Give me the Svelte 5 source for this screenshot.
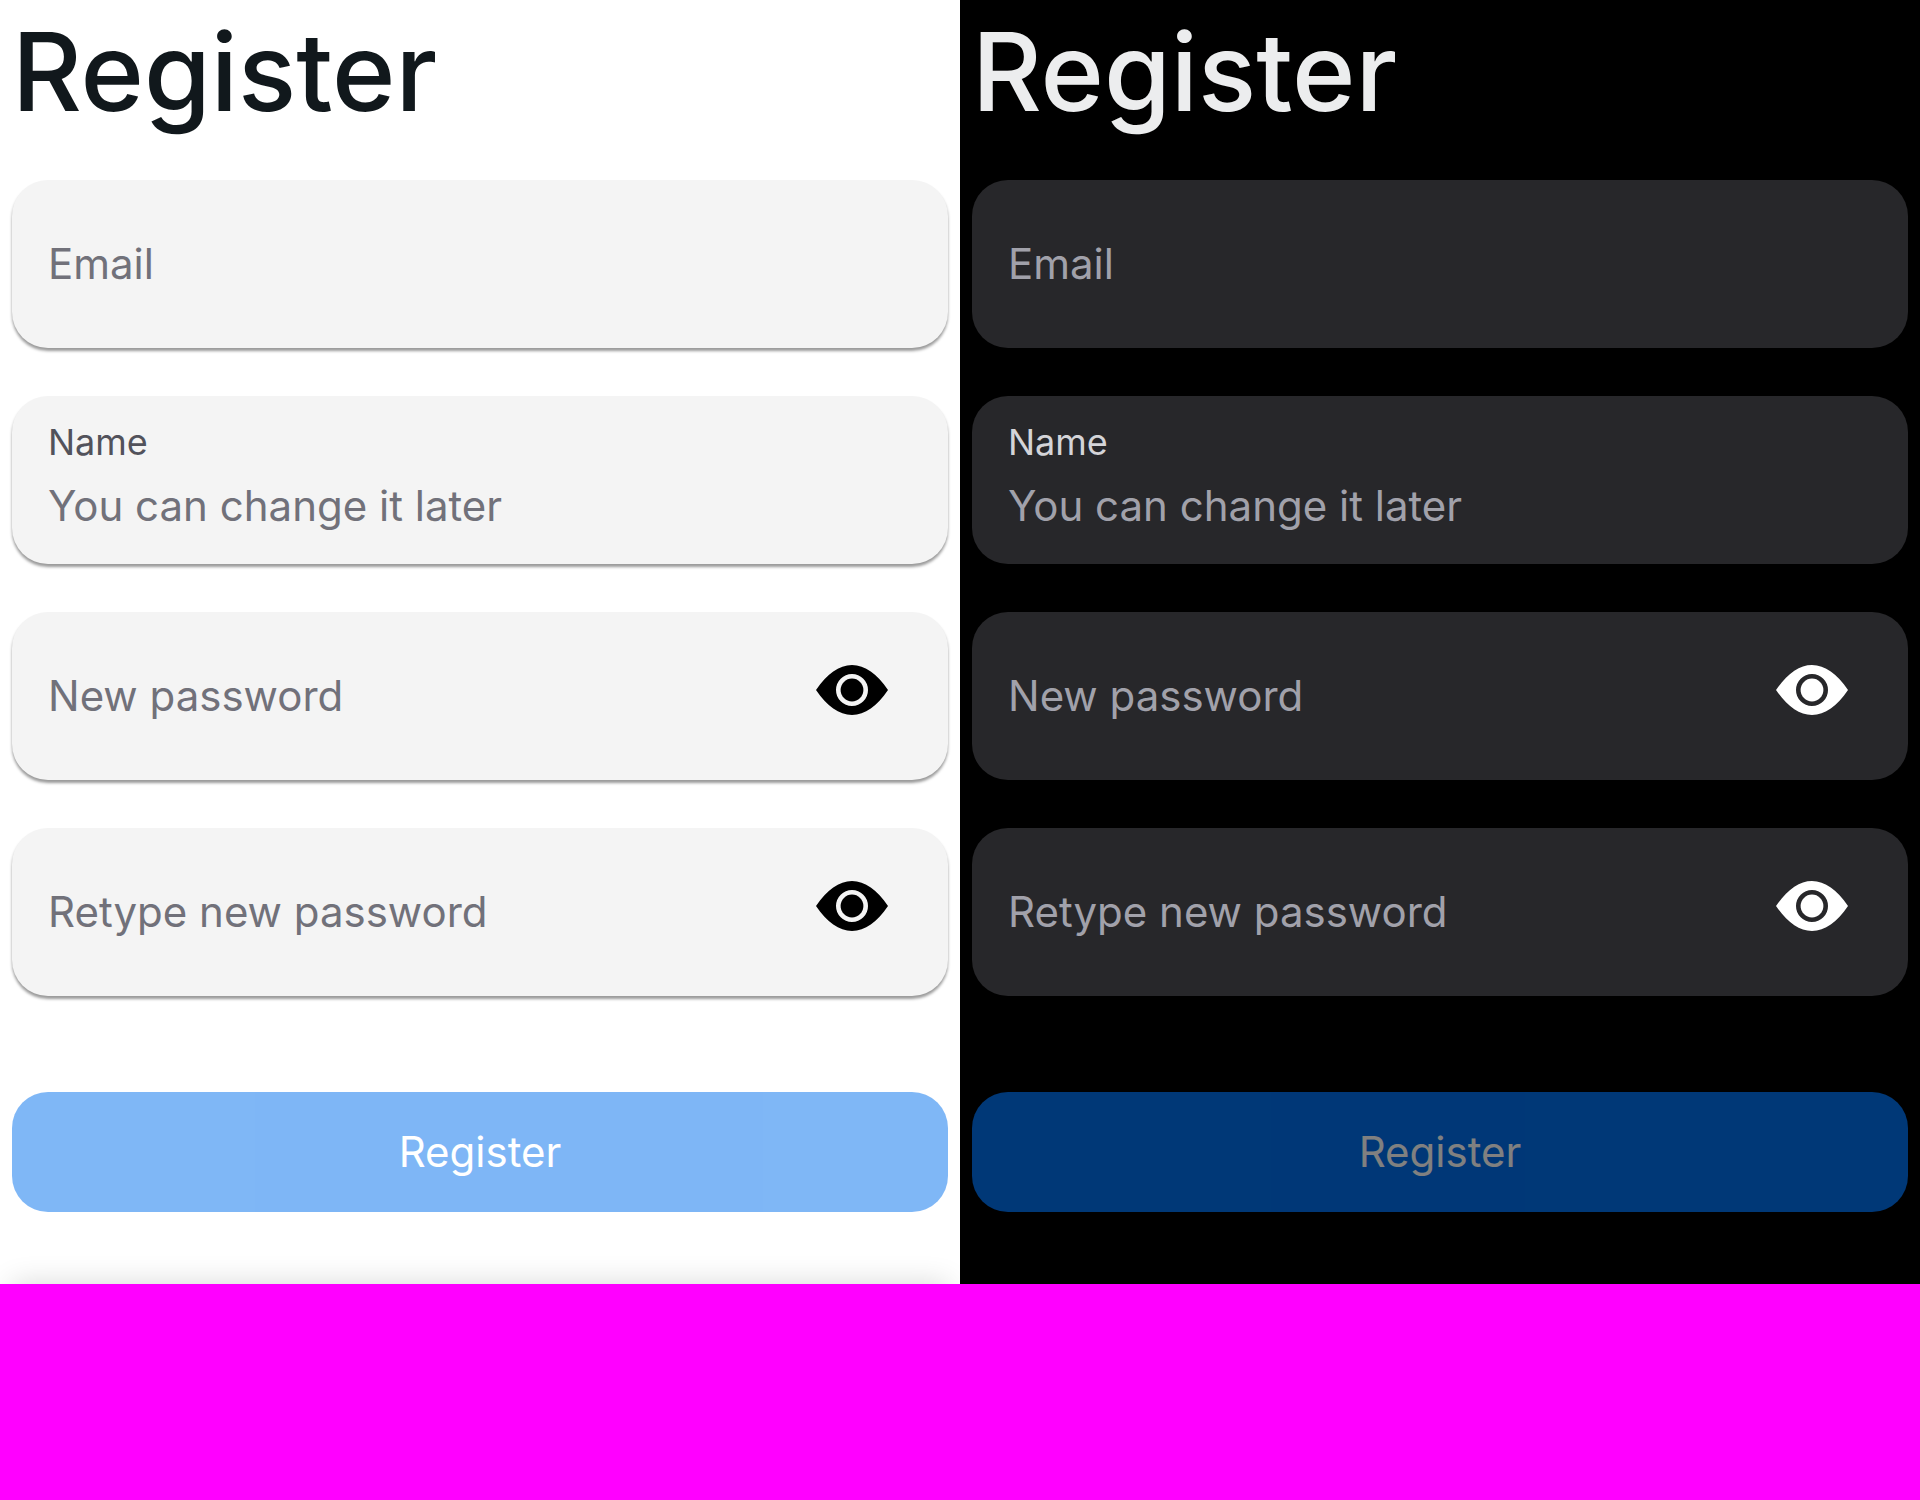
<script>
  const themes = ['light', 'dark'];
  const fields = [
    { id: 'email', label: 'Email', type: 'email' },
    { id: 'name', label: 'Name', type: 'text', placeholder: 'You can change it later' },
    { id: 'password', label: 'New password', type: 'password', reveal: true },
    { id: 'retype', label: 'Retype new password', type: 'password', reveal: true }
  ];
  let shown = $state({});
</script>

<main>
  {#each themes as theme}
    <form class="panel {theme}">
      <h1>Register</h1>
      {#each fields as field}
        {@const key = `${theme}-${field.id}`}
        <div class="field" class:raised={field.placeholder}>
          <div class="entry">
            <label for={key}>{field.label}</label>
            <input
              id={key}
              type={shown[key] ? 'text' : field.type}
              placeholder={field.placeholder}
            />
          </div>
          {#if field.reveal}
            <button
              class="reveal"
              type="button"
              aria-label="Toggle password visibility"
              onclick={() => (shown[key] = !shown[key])}
            >
              <svg viewBox="0 0 72 50" aria-hidden="true">
                <path
                  fill-rule="evenodd"
                  d="M0 25C11 9 23 0 36 0S61 9 72 25C61 41 49 50 36 50S11 41 0 25ZM36 9a16 16 0 1 0 0 32a16 16 0 1 0 0-32Z"
                />
                <circle cx="36" cy="25" r="11.4" />
              </svg>
            </button>
          {/if}
        </div>
      {/each}
      <button class="submit" type="submit" disabled>Register</button>
    </form>
  {/each}
</main>

<style>
  :global(body) {
    margin: 0;
    background: #ff00ff;
  }
  main {
    display: grid;
    grid-template-columns: 1fr 1fr;
    font-family: Inter, 'Liberation Sans', sans-serif;
  }
  .panel {
    --field: #f4f4f4;
    --muted: #71717a;
    --label: #52525b;
    --icon: #000;
    --shadow: 0 3px 3px rgb(0 0 0 / 0.4);
    display: flex;
    flex-direction: column;
    gap: 48px;
    padding: 12px 12px 0;
    overflow: hidden;
    background: #fff;
    color: #11181c;
  }
  /* soft shade cast upwards from just below the panel's lower edge */
  .panel::after {
    content: '';
    height: 48px;
    margin: 24px 0 -48px;
    box-shadow: 0 0 30px rgb(0 0 0 / 0.16);
  }
  .dark {
    --field: #27272a;
    --muted: #a1a1aa;
    --label: #d4d4d8;
    --icon: #fff;
    --shadow: none;
    background: #000;
    color: #ecedee;
  }
  h1 {
    margin: 0;
    font-size: 108px;
    line-height: 120px;
    font-weight: 500;
  }
  .field {
    display: flex;
    padding: 24px 36px;
    border-radius: 36px;
    background: var(--field);
    box-shadow: var(--shadow);
  }
  .entry {
    flex: 1;
    display: grid;
    min-height: 120px;
    align-items: center;
  }
  label,
  input {
    grid-area: 1 / 1;
    font-size: 42px;
    line-height: 60px;
    color: var(--muted);
  }
  label {
    pointer-events: none;
  }
  input {
    box-sizing: border-box;
    width: 100%;
    height: 60px;
    padding: 0;
    border: 0;
    outline: 0;
    background: none;
    font-family: inherit;
  }
  input::placeholder {
    color: var(--muted);
    opacity: 1;
  }
  .raised .entry {
    display: flex;
    flex-direction: column;
    align-items: stretch;
    gap: 12px;
  }
  .raised label {
    font-size: 36px;
    line-height: 44px;
    color: var(--label);
  }
  .reveal {
    display: flex;
    align-items: center;
    align-self: flex-start;
    height: 108px;
    padding: 0 24px;
    border: 0;
    background: none;
    cursor: pointer;
  }
  svg {
    width: 72px;
    height: 50px;
    fill: var(--icon);
  }
  .submit {
    height: 120px;
    margin-top: 48px;
    border: 0;
    border-radius: 36px;
    background: #006fee;
    color: #fff;
    font-family: inherit;
    font-size: 42px;
    line-height: 60px;
    opacity: 0.5;
  }
</style>
